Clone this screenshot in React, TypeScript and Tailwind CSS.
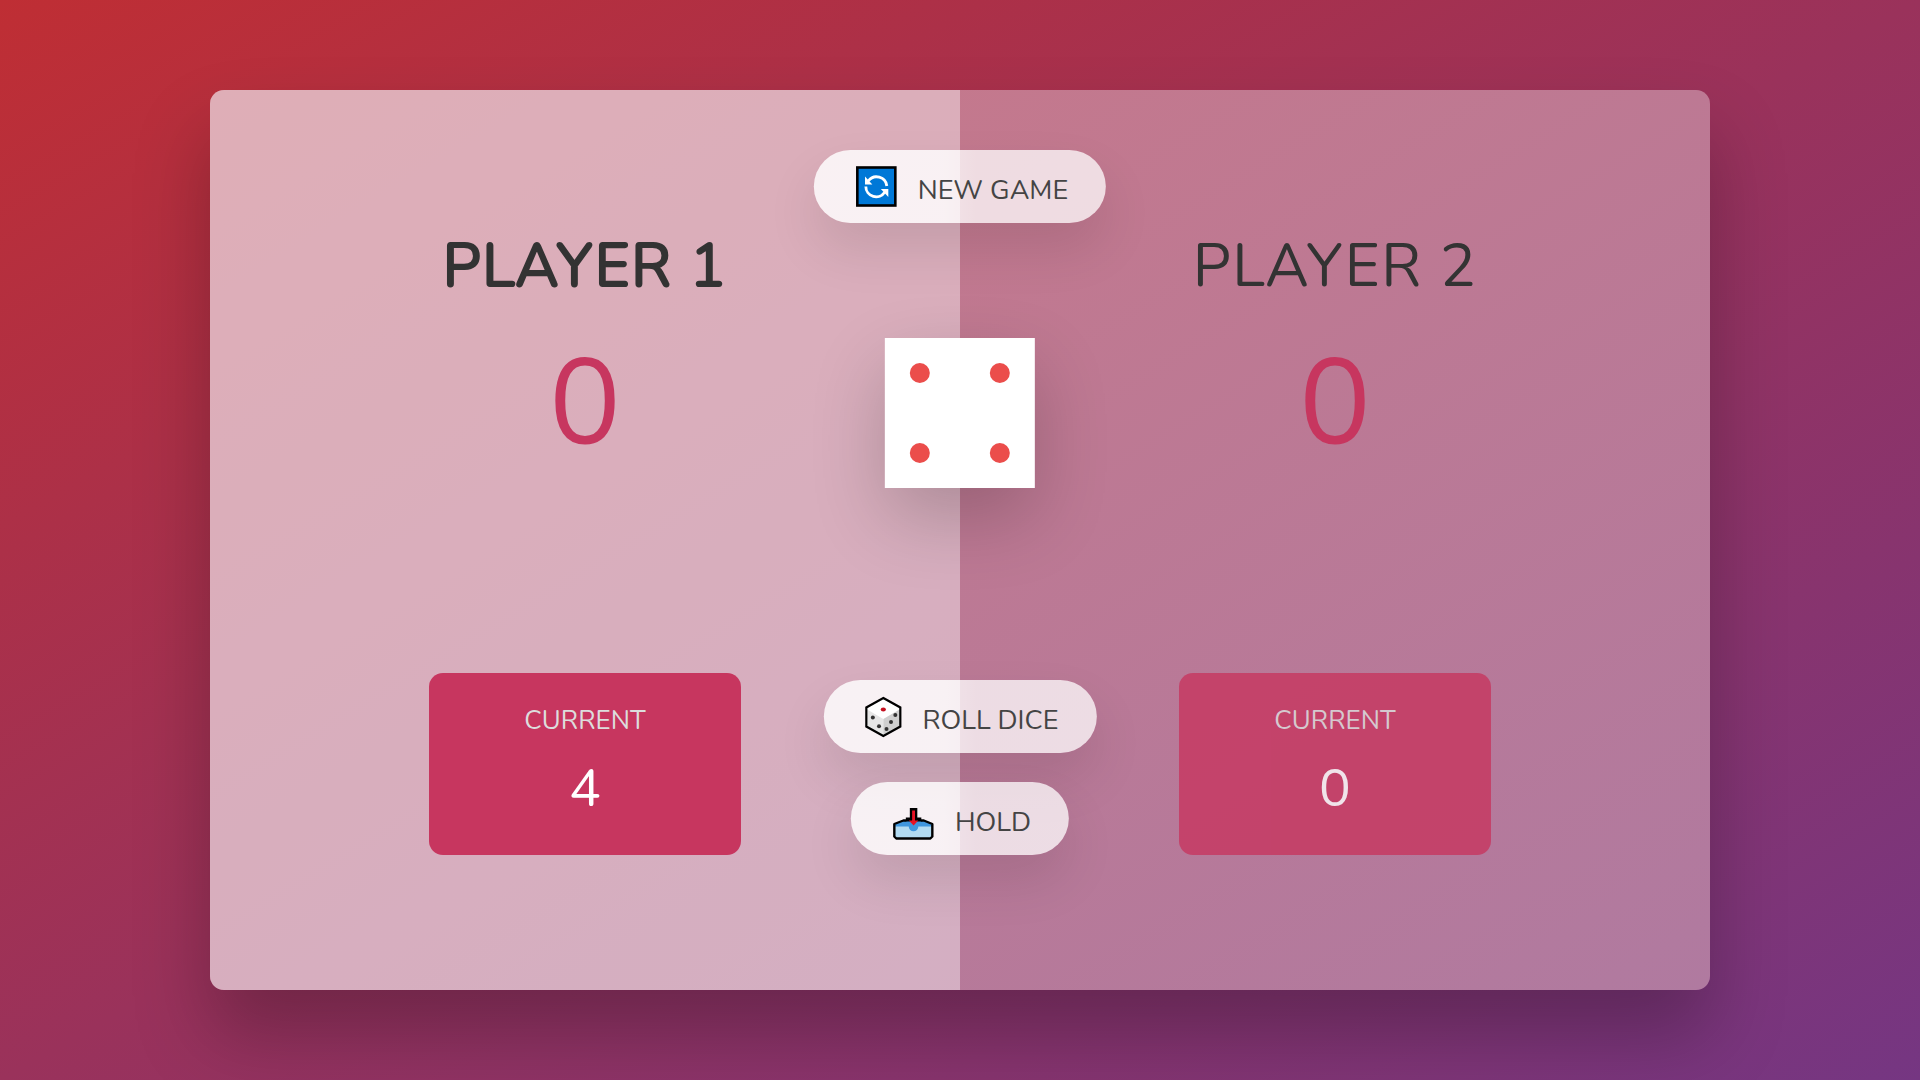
import type { ReactNode } from 'react';

function RefreshIcon() {
  return (
    <svg viewBox="0 0 50 50" className="h-[50px] w-[50px] shrink-0" aria-hidden="true">
      <rect x="5.500" y="5.500" width="38" height="38" fill="#0078d7" stroke="#000" strokeWidth="2.6" />
      <g fill="none" stroke="#fff" strokeWidth="2.8">
        <path d="M16.500 19 A10.300 10.300 0 0 1 35 24" />
        <path d="M14 24.500 A10.300 10.300 0 0 0 33 30" />
      </g>
      <path d="M13.200 14.500 V22.500 H20.500 Z" fill="#fff" />
      <path d="M36.500 35 V27 H29 Z" fill="#fff" />
    </svg>
  );
}

function DiceIcon() {
  return (
    <svg viewBox="0 0 45 50" className="h-[50px] w-[45px] shrink-0" aria-hidden="true">
      <path d="M21.500 6 L38.500 15.500 V34.500 L21.500 44 L4.500 34.500 V15.500 Z" fill="#fff" />
      <path d="M4.500 17 L21.500 27 V44 L4.500 34.500 Z" fill="#e6e6e6" />
      <path d="M38.500 17 L21.500 27 V44 L38.500 34.500 Z" fill="#cfcfcf" />
      <path d="M21.500 6 L38.500 15.500 V34.500 L21.500 44 L4.500 34.500 V15.500 Z" fill="none" stroke="#000" strokeWidth="2.2" />
      <ellipse cx="21.500" cy="17.500" rx="2.600" ry="1.900" fill="#c50f1f" />
      <g fill="#333">
        <circle cx="11" cy="25.500" r="2" />
        <circle cx="17.200" cy="34.300" r="2" />
        <circle cx="33.500" cy="23" r="2" />
        <circle cx="29.200" cy="30" r="2" />
        <circle cx="24.700" cy="37" r="2" />
      </g>
    </svg>
  );
}

function InboxIcon() {
  return (
    <svg viewBox="0 0 50 50" className="h-[50px] w-[50px] shrink-0" aria-hidden="true">
      <path d="M5.500 30 L14 26.500 H35 L43.500 30 V42.500 L41.500 44.500 H7.500 L5.500 42.500 Z" fill="#b3dbf2" />
      <path d="M5.500 32.500 V30 L14 26.500 H35 L43.500 30 V32.500 H29.500 A4.800 4.800 0 0 1 19.900 32.500 Z" fill="#3f96de" />
      <path d="M17.500 26.500 H14.500 L5.500 30 V42.500 L7.500 44.500 H41.500 L43.500 42.500 V30 L35 26.500 H32" fill="none" stroke="#000" strokeWidth="2.4" strokeLinejoin="round" />
      <path d="M21 14 H28.500 V23.500 H32.500 V27.500 H17 V23.500 H21 Z" fill="#000" />
      <path d="M23.300 16.500 H26.200 V26.500 H29.500 L24.750 31.500 L20 26.500 H23.300 Z" fill="#e81224" />
    </svg>
  );
}

function GameButton({ icon, children }: { icon: ReactNode; children: ReactNode }) {
  return (
    <button
      type="button"
      className="flex h-[73px] cursor-pointer items-center gap-4 rounded-full bg-[linear-gradient(to_right,rgba(255,255,255,0.83)_calc(50%-16px),rgba(255,255,255,0.8)_50%,rgba(255,255,255,0.77)_50%,rgba(255,255,255,0.74)_calc(50%+16px))] px-[38px] text-[27px] font-normal text-[#444] uppercase shadow-[0_26px_52px_rgba(0,0,0,0.1)]"
    >
      {icon}
      <span className="pt-2.5">{children}</span>
    </button>
  );
}

function Player({ name, score, current, active }: { name: string; score: number; current: number; active: boolean }) {
  return (
    <section className={`flex flex-1 flex-col items-center px-8 py-[135px] xl:px-[135px] ${active ? 'bg-white/40' : ''}`}>
      <h2
        className={`mb-4 text-[60px] leading-[82px] font-normal tracking-wide whitespace-nowrap text-[#333] uppercase ${active ? '[-webkit-text-stroke:2px_#333]' : ''}`}
      >
        {name}
      </h2>
      <p className="mb-auto text-[120px] leading-[162px] text-[#c7365f]">{score}</p>
      <div className={`w-[65%] rounded-[14px] bg-[#c7365f] p-[30px] text-center text-white ${active ? '' : 'opacity-80'}`}>
        <p className="mb-[14px] text-[26px] leading-[36px] text-[#ddd] uppercase">Current</p>
        <p className="text-[53px] leading-[72px]">{current}</p>
      </div>
    </section>
  );
}

function Die() {
  return (
    <svg
      viewBox="0 0 150 150"
      role="img"
      aria-label="Dice showing 4"
      className="mt-[115px] size-[150px] bg-white shadow-[0_30px_75px_rgba(0,0,0,0.2)]"
    >
      <g fill="#eb4d4b">
        <circle cx="35" cy="35" r="10" />
        <circle cx="115" cy="35" r="10" />
        <circle cx="35" cy="115" r="10" />
        <circle cx="115" cy="115" r="10" />
      </g>
    </svg>
  );
}

export default function App() {
  return (
    <div className="flex min-h-screen bg-[linear-gradient(to_top_left,#753682_0%,#bf2e34_100%)] px-6 py-[90px] font-['Nunito','Lato',sans-serif] xl:px-[210px]">
      <main className="relative flex flex-1 overflow-hidden rounded-[14px] bg-[linear-gradient(to_top_left,#b07aa0_0%,#ca7887_100%)] shadow-[0_45px_75px_rgba(0,0,0,0.25)]">
        <Player name="Player 1" score={0} current={4} active />
        <Player name="Player 2" score={0} current={0} active={false} />
        <div className="absolute inset-y-0 left-1/2 flex -translate-x-1/2 flex-col items-center pt-[60px] pb-[135px]">
          <GameButton icon={<RefreshIcon />}>New game</GameButton>
          <Die />
          <div className="mt-auto flex flex-col items-center gap-[29px]">
            <GameButton icon={<DiceIcon />}>Roll dice</GameButton>
            <GameButton icon={<InboxIcon />}>Hold</GameButton>
          </div>
        </div>
      </main>
    </div>
  );
}
